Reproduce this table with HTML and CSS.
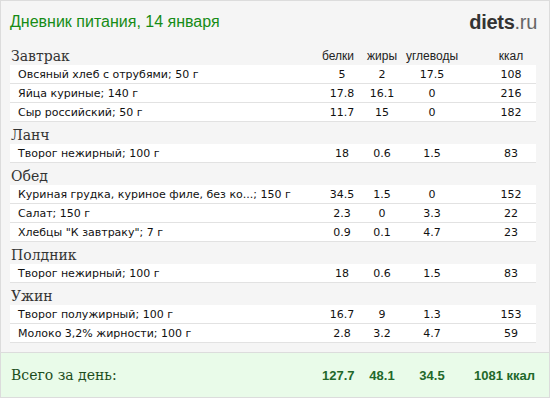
FILE: index.html
```html
<!DOCTYPE html>
<html lang="ru">
<head>
<meta charset="utf-8">
<link rel="stylesheet" href="styles.css">
</head>
<body>
<div class="page">
  <div class="top">
    <div class="title">Дневник питания, 14 января</div>
    <div class="logo"><b>diets</b>.ru</div>
  </div>
  <div class="diary">
    <div class="head">
      <div class="meal">Завтрак</div>
      <div class="num">белки</div>
      <div class="num">жиры</div>
      <div class="num">углеводы</div>
      <div class="num">ккал</div>
    </div>
    <div class="row"><div class="name">Овсяный хлеб с отрубями; 50 г</div><div class="num">5</div><div class="num">2</div><div class="num">17.5</div><div class="num">108</div></div>
    <div class="row"><div class="name">Яйца куриные; 140 г</div><div class="num">17.8</div><div class="num">16.1</div><div class="num">0</div><div class="num">216</div></div>
    <div class="row"><div class="name">Сыр российский; 50 г</div><div class="num">11.7</div><div class="num">15</div><div class="num">0</div><div class="num">182</div></div>

    <div class="head"><div class="meal">Ланч</div></div>
    <div class="row"><div class="name">Творог нежирный; 100 г</div><div class="num">18</div><div class="num">0.6</div><div class="num">1.5</div><div class="num">83</div></div>

    <div class="head"><div class="meal">Обед</div></div>
    <div class="row"><div class="name">Куриная грудка, куриное филе, без ко...; 150 г</div><div class="num">34.5</div><div class="num">1.5</div><div class="num">0</div><div class="num">152</div></div>
    <div class="row"><div class="name">Салат; 150 г</div><div class="num">2.3</div><div class="num">0</div><div class="num">3.3</div><div class="num">22</div></div>
    <div class="row"><div class="name">Хлебцы "К завтраку"; 7 г</div><div class="num">0.9</div><div class="num">0.1</div><div class="num">4.7</div><div class="num">23</div></div>

    <div class="head"><div class="meal">Полдник</div></div>
    <div class="row"><div class="name">Творог нежирный; 100 г</div><div class="num">18</div><div class="num">0.6</div><div class="num">1.5</div><div class="num">83</div></div>

    <div class="head"><div class="meal">Ужин</div></div>
    <div class="row"><div class="name">Творог полужирный; 100 г</div><div class="num">16.7</div><div class="num">9</div><div class="num">1.3</div><div class="num">153</div></div>
    <div class="row"><div class="name">Молоко 3,2% жирности; 100 г</div><div class="num">2.8</div><div class="num">3.2</div><div class="num">4.7</div><div class="num">59</div></div>
  </div>
  <div class="total">
    <div class="total-label">Всего за день:</div>
    <div class="tnum">127.7</div>
    <div class="tnum">48.1</div>
    <div class="tnum">34.5</div>
    <div class="tnum kcal">1081 ккал</div>
  </div>
</div>
</body>
</html>
```
FILE: styles.css
```css
html, body {
  margin: 0;
  padding: 0;
}
body {
  width: 550px;
  height: 398px;
  background: #ffffff;
}
.page {
  box-sizing: border-box;
  width: 550px;
  height: 398px;
  border: 1px solid #dcdcdc;
  background: #f5f5f5;
  display: flex;
  flex-direction: column;
}
.top {
  display: flex;
  justify-content: space-between;
  align-items: center;
  padding: 5px 12px 0 9px;
  height: 32px;
}
.title {
  font-family: "Liberation Sans", Arial, sans-serif;
  font-size: 16px;
  color: #168c16;
}
.logo {
  font-family: "Liberation Sans", Arial, sans-serif;
  font-size: 20px;
  color: #666;
  letter-spacing: -0.3px;
}
.logo b {
  color: #333;
  font-weight: bold;
}
.diary {
  padding: 0 13px 0 9px;
}
.head, .row {
  display: grid;
  grid-template-columns: 1fr 40px 40px 60px 74px;
  align-items: center;
}
.head .num:last-child, .row .num:last-child {
  padding-left: 24px;
}
.head {
  box-sizing: border-box;
  height: 22px;
  padding-top: 3px;
}
.head:first-child {
  margin-top: 5px;
}
.meal {
  font-family: "DejaVu Serif", Georgia, serif;
  font-size: 14px;
  color: #333;
  padding-left: 1px;
}
.head .num {
  font-family: "Liberation Sans", Tahoma, sans-serif;
  font-size: 12px;
  color: #222;
  text-align: center;
}
.head .num:nth-child(2) {
  padding-right: 12px;
}
.row {
  height: 18px;
  background: #fff;
  border-bottom: 1px solid #e2e2e2;
  font-family: "DejaVu Sans", Verdana, sans-serif;
  font-size: 11px;
  color: #111;
}
.name {
  padding-left: 8px;
  white-space: nowrap;
}
.row .num {
  text-align: center;
}
.total {
  margin-top: auto;
  height: 44px;
  border-top: 1px solid #dcdcdc;
  background: #e9fbe9;
  display: grid;
  grid-template-columns: 1fr 40px 40px 60px 74px;
  align-items: center;
  padding: 0 13px 0 9px;
}
.total-label {
  font-family: "DejaVu Serif", Georgia, serif;
  font-size: 14px;
  color: #1c4d1c;
  padding-left: 1px;
}
.tnum {
  font-family: "Liberation Sans", Arial, sans-serif;
  font-weight: bold;
  font-size: 13px;
  color: #22682a;
  text-align: center;
}
.tnum:nth-child(2) {
  padding-right: 12px;
}
.tnum.kcal {
  text-align: right;
  padding-right: 1px;
}
```
